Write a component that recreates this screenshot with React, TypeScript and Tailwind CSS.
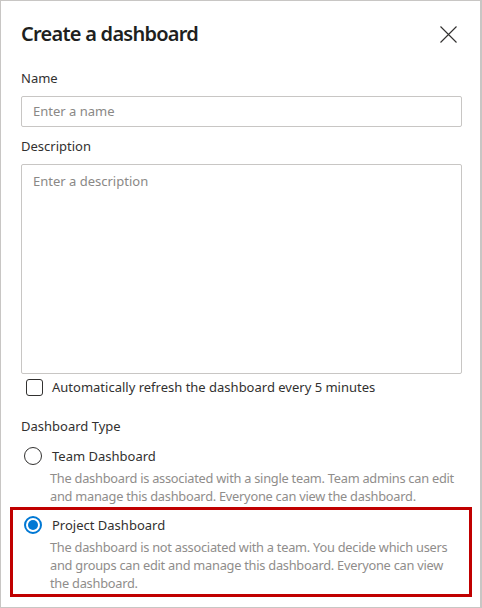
import React from "react";

const font = { fontFamily: '"Noto Sans", "Open Sans", sans-serif' };

const Radio = ({ checked }: { checked?: boolean }) =>
  checked ? (
    <span className="flex h-[18px] w-[18px] shrink-0 items-center justify-center rounded-full border-[2px] border-[#0078d4]">
      <span className="h-[10px] w-[10px] rounded-full bg-[#0078d4]" />
    </span>
  ) : (
    <span className="h-[18px] w-[18px] shrink-0 rounded-full border border-[#323130]" />
  );

const TypeOption = ({
  title,
  lines,
  checked,
}: {
  title: string;
  lines: string[];
  checked?: boolean;
}) => (
  <div className="flex flex-col">
    <div className="flex h-[20px] items-center gap-[10px] pl-[3px]">
      <Radio checked={checked} />
      <span className="text-[13px] leading-[20px] text-[#323130]">{title}</span>
    </div>
    <div className="mt-[3px] flex flex-col pl-[29px] text-[12.8px] leading-[18px] tracking-[-0.25px] whitespace-nowrap text-[#8f8d8b]">
      {lines.map((l) => (
        <span key={l}>{l}</span>
      ))}
    </div>
  </div>
);

export default function App() {
  return (
    <div
      style={font}
      className="box-border h-[608px] w-[482px] overflow-hidden border border-r-[2px] border-[#c8c6c4] bg-white"
    >
      <div className="flex flex-col px-[20px] pt-[18px]">
        <div className="flex h-[30px] items-center justify-between">
          <h1 className="text-[20px] font-semibold leading-[30px] tracking-[-0.75px] text-[#201f1e]">Create a dashboard</h1>
          <svg width="17" height="17" viewBox="0 0 17 17" className="mr-[3px]">
            <path d="M0.5 0.5L16.5 16.5M16.5 0.5L0.5 16.5" stroke="#323130" strokeWidth="1.1" fill="none" />
          </svg>
        </div>

        <label className="mt-[19px] text-[13px] leading-[20px] text-[#323130]">Name</label>
        <div className="mt-[8px] flex h-[31px] w-[441px] items-center rounded-[2px] border border-[#c8c6c4] px-[11px] text-[13px] text-[#8a8886]">
          Enter a name
        </div>

        <label className="mt-[9px] text-[13px] leading-[20px] text-[#323130]">Description</label>
        <div className="mt-[8px] h-[210px] w-[441px] rounded-[2px] border border-[#c8c6c4] px-[11px] pt-[6px] text-[13px] leading-[20px] text-[#8a8886]">
          Enter a description
        </div>

        <div className="mt-[3px] flex h-[20px] items-center gap-[9px] pl-[5px]">
          <span className="h-[17px] w-[17px] rounded-[3px] border border-[#323130]" />
          <span className="text-[13px] leading-[20px] text-[#323130]">
            Automatically refresh the dashboard every 5 minutes
          </span>
        </div>

        <label className="mt-[19px] text-[13px] leading-[20px] text-[#323130]">Dashboard Type</label>

        <div className="mt-[10px]">
          <TypeOption
            title="Team Dashboard"
            lines={[
              "The dashboard is associated with a single team. Team admins can edit",
              "and manage this dashboard. Everyone can view the dashboard.",
            ]}
          />
        </div>

        <div className="-mx-[11px] mt-[2px] box-border h-[90px] w-[462px] border-[3px] border-[#c00000] pl-[8px] pt-[5px]">
          <TypeOption
            checked
            title="Project Dashboard"
            lines={[
              "The dashboard is not associated with a team. You decide which users",
              "and groups can edit and manage this dashboard. Everyone can view",
              "the dashboard.",
            ]}
          />
        </div>
      </div>
    </div>
  );
}
